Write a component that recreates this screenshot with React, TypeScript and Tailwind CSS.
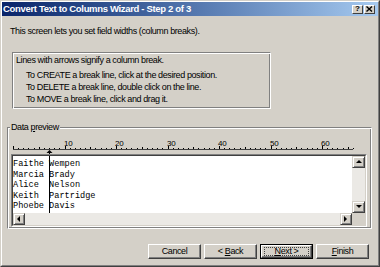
import React from 'react';

const rows = ['Faithe Wempen', 'Marcia Brady', 'Alice  Nelson', 'Keith  Partridge', 'Phoebe Davis'];
const CW = 5.15;

function Arrow({ dir }: { dir: 'up' | 'down' | 'left' | 'right' }) {
  const pts = {
    up: '1,5 4,2 7,5',
    down: '1,2 4,5 7,2',
    left: '5,1 2,4 5,7',
    right: '2,1 5,4 2,7',
  }[dir];
  return (
    <svg width="8" height="8" viewBox="0 0 8 8">
      <polygon points={pts} fill="#000" />
    </svg>
  );
}

function ScrollBtn({ dir, className }: { dir: 'up' | 'down' | 'left' | 'right'; className: string }) {
  return (
    <div
      className={`${className} flex items-center justify-center bg-[#d4d0c8] border border-t-[#d4d0c8] border-l-[#d4d0c8] border-r-[#404040] border-b-[#404040] shadow-[inset_1px_1px_#fff,inset_-1px_-1px_#808080]`}
    >
      <Arrow dir={dir} />
    </div>
  );
}

function Ruler() {
  const ticks = [];
  for (let k = 0; k <= 66; k++) {
    const x = Math.round(2 + k * CW);
    const h = k % 10 === 0 ? 3 : k % 5 === 0 ? 2 : 1;
    ticks.push(<rect key={k} x={x} y={11 - h} width={1} height={h} fill="#000" />);
  }
  const labels = [10, 20, 30, 40, 50, 60];
  return (
    <svg width="343" height="16" viewBox="0 0 343 16" className="block">
      <rect x="2" y="11" width="340" height="1" fill="#404040" />
      {ticks}
      {labels.map((n) => (
        <text
          key={n}
          x={Math.round(2 + n * CW) - 1}
          y="8"
          fontSize="8"
          fontFamily="Liberation Sans, Arial, sans-serif"
          letterSpacing="-0.3"
          fill="#000"
        >
          {n}
        </text>
      ))}
      <polygon points="35.5,15 38.5,12 41.5,15" fill="#000" />
      <rect x="38" y="14" width="1" height="2" fill="#000" />
    </svg>
  );
}

function Button({ children, def }: { children: React.ReactNode; def?: boolean }) {
  if (def) {
    return (
      <div className="w-[53px] h-[15px] border border-black">
        <div className="h-full border border-t-white border-l-white border-r-[#404040] border-b-[#404040] shadow-[inset_-1px_-1px_#808080] px-[2px] py-[1px]">
          <div className="h-full border border-dotted border-[#404040] flex items-center justify-center leading-none">
            <span>{children}</span>
          </div>
        </div>
      </div>
    );
  }
  return (
    <div className="w-[53px] h-[15px] border border-t-white border-l-white border-r-[#404040] border-b-[#404040] shadow-[inset_-1px_-1px_#808080] flex items-center justify-center leading-none">
      <span>{children}</span>
    </div>
  );
}

export default function App() {
  return (
    <div className="w-[380px] h-[267px] bg-[#d4d0c8] border border-t-[#d4d0c8] border-l-[#d4d0c8] border-r-[#404040] border-b-[#404040] font-['Liberation_Sans',Arial,sans-serif] text-[9px] tracking-[-0.4px] text-black">
      <div className="h-full border border-t-white border-l-white border-r-[#808080] border-b-[#808080] flex flex-col">
        {/* title bar */}
        <div className="h-[14px] flex items-center bg-linear-to-r from-[#0a246a] to-[#a6caf0]">
          <span className="flex-1 pl-[1px] text-white font-bold text-[9.5px] leading-[14px] tracking-[-0.33px]">
            Convert Text to Columns Wizard - Step 2 of 3
          </span>
          <div className="flex gap-[1px] mr-[3px]">
            <div className="w-[11px] h-[9px] bg-[#d4d0c8] border border-t-white border-l-white border-r-[#404040] border-b-[#404040] flex items-center justify-center text-[8px] font-bold leading-none tracking-normal">
              ?
            </div>
            <div className="w-[11px] h-[9px] bg-[#d4d0c8] border border-t-white border-l-white border-r-[#404040] border-b-[#404040] flex items-center justify-center">
              <svg width="7" height="6" viewBox="0 0 7 6">
                <path d="M0.5 0.5 L6 5.5 M6 0.5 L0.5 5.5" stroke="#000" strokeWidth="1.4" />
              </svg>
            </div>
          </div>
        </div>

        <p className="mt-[10px] ml-[8px] leading-[11px]">This screen lets you set field widths (column breaks).</p>

        {/* instructions */}
        <div className="mt-[15px] ml-[10px] w-[259px] h-[57px] border border-t-[#808080] border-l-[#808080] border-r-white border-b-white shadow-[inset_1px_1px_#fff,inset_-1px_-1px_#808080] pt-[2px] pl-[3px]">
          <p className="leading-[11px]">Lines with arrows signify a column break.</p>
          <div className="mt-[3px] ml-[10px] leading-[12px]">
            <p>To CREATE a break line, click at the desired position.</p>
            <p>To DELETE a break line, double click on the line.</p>
            <p>To MOVE a break line, click and drag it.</p>
          </div>
        </div>

        {/* data preview group */}
        <div className="relative mt-[18px] ml-[5px] w-[365px] h-[102px] border border-t-[#808080] border-l-[#808080] border-r-white border-b-white shadow-[inset_1px_1px_#fff,inset_-1px_-1px_#808080] pt-[10px] pl-[3px]">
          <span className="absolute top-[-6px] left-[2px] px-[1px] bg-[#d4d0c8] leading-[11px]">
            Data <u>p</u>review
          </span>
          <Ruler />
          <div className="w-[356px] border border-t-[#808080] border-l-[#808080] border-r-white border-b-white">
            <div className="border border-t-[#404040] border-l-[#404040] border-r-[#d4d0c8] border-b-[#d4d0c8] grid grid-cols-[339px_13px] grid-rows-[57px_12px]">
              <div className="relative bg-white pt-[3px] font-['Liberation_Mono','Courier_New',monospace] text-[8.6px] leading-[10.6px] tracking-[0px] whitespace-pre">
                {rows.map((r) => (
                  <div key={r}>{r}</div>
                ))}
                <div className="absolute left-[36px] top-0 bottom-0 w-[1px] bg-black" />
              </div>
              <div className="flex flex-col bg-[#ebe9e5]">
                <ScrollBtn dir="up" className="h-[12px]" />
                <div className="flex-1" />
                <ScrollBtn dir="down" className="h-[12px]" />
              </div>
              <div className="flex bg-[#ebe9e5]">
                <ScrollBtn dir="left" className="w-[12px]" />
                <div className="flex-1" />
                <ScrollBtn dir="right" className="w-[12px]" />
              </div>
              <div className="bg-[#d4d0c8]" />
            </div>
          </div>
        </div>

        {/* buttons */}
        <div className="mt-[15px] mr-[9px] flex justify-end gap-[3px]">
          <Button>Cancel</Button>
          <Button>
            &lt; <u>B</u>ack
          </Button>
          <Button def>
            <u>N</u>ext &gt;
          </Button>
          <Button>
            <u>F</u>inish
          </Button>
        </div>
      </div>
    </div>
  );
}
